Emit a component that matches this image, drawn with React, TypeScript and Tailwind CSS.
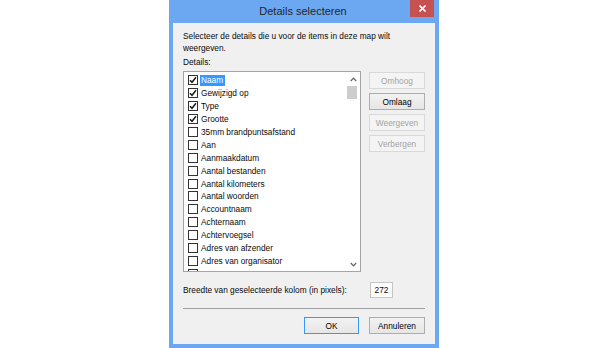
import { useState } from "react";

const ITEMS = [
  { label: "Naam", checked: true },
  { label: "Gewijzigd op", checked: true },
  { label: "Type", checked: true },
  { label: "Grootte", checked: true },
  { label: "35mm brandpuntsafstand", checked: false },
  { label: "Aan", checked: false },
  { label: "Aanmaakdatum", checked: false },
  { label: "Aantal bestanden", checked: false },
  { label: "Aantal kilometers", checked: false },
  { label: "Aantal woorden", checked: false },
  { label: "Accountnaam", checked: false },
  { label: "Achternaam", checked: false },
  { label: "Achtervoegsel", checked: false },
  { label: "Adres van afzender", checked: false },
  { label: "Adres van organisator", checked: false },
  // next row only peeks out under the edge, its label is out of view
  { label: "", checked: false },
];

function Check({ checked }: { checked: boolean }) {
  return (
    <div className="w-[10px] h-[10px] shrink-0 border border-[#333333] bg-white flex items-center justify-center">
      {checked && (
        <svg width="8" height="8" viewBox="0 0 8 8">
          <path d="M1 4.2 L3 6.3 L7 1.3" fill="none" stroke="#1a1a1a" strokeWidth="1.5" />
        </svg>
      )}
    </div>
  );
}

function Button({ label, disabled = false, primary = false }: { label: string; disabled?: boolean; primary?: boolean }) {
  return (
    <div
      className={`h-[17px] flex items-center justify-center border text-[8.3px] ${
        disabled
          ? "border-[#d9d9d9] bg-[#f4f4f4] text-[#a3a3a3]"
          : primary
          ? "border-[#3399ff] bg-gradient-to-b from-[#f2f2f2] to-[#e6e6e6] text-black"
          : "border-[#adadad] bg-gradient-to-b from-[#f2f2f2] to-[#e6e6e6] text-black"
      }`}
    >
      {label}
    </div>
  );
}

export default function App() {
  const [items] = useState(ITEMS);

  return (
    <div className="w-[608px] h-[348px] bg-white flex justify-center overflow-hidden font-['Liberation_Sans',Arial,sans-serif] text-[#0a0a0a]">
      <div className="w-[270px] h-[348px] shrink-0 bg-[#6ba8f1] flex flex-col px-[4px]">
        {/* title bar */}
        <div className="relative h-[23px] flex items-center justify-center">
          <span className="text-[11px] text-[#262626] pr-[2px]">Details selecteren</span>
          <div className="absolute top-0 right-[1px] w-[24px] h-[17px] bg-[#c75050] flex items-center justify-center">
            <svg width="7" height="7" viewBox="0 0 7 7">
              <path d="M0.5 0.5 L6.5 6.5 M6.5 0.5 L0.5 6.5" stroke="white" strokeWidth="1.6" />
            </svg>
          </div>
        </div>

        <div className="h-[321px] bg-[#f0f0f0] flex flex-col px-[10px] pt-[7px] text-[8.3px] leading-[12px]">
          <p>Selecteer de details die u voor de items in deze map wilt</p>
          <p>weergeven.</p>
          <p className="mt-[2px]">Details:</p>

          <div className="mt-[3px] flex gap-[8px]">
            {/* list */}
            <div className="w-[178px] h-[201px] border border-[#a5a5a5] bg-white flex overflow-hidden">
              <div className="flex-1 pt-[2px] pl-[4px] overflow-hidden">
                {items.map((it, i) => (
                  <div key={i} className="h-[12.9px] flex items-center">
                    <Check checked={it.checked} />
                    {it.label && (
                      <span
                        className={`ml-[2px] h-[11px] px-[1px] flex items-center whitespace-nowrap ${
                          i === 0 ? "bg-[#3399ff] text-white pr-[2px]" : ""
                        }`}
                      >
                        {it.label}
                      </span>
                    )}
                  </div>
                ))}
              </div>
              {/* scrollbar */}
              <div className="w-[14px] flex flex-col">
                <div className="h-[14px] flex items-center justify-center">
                  <svg width="7" height="5" viewBox="0 0 7 5">
                    <path d="M0.8 4 L3.5 1.2 L6.2 4" fill="none" stroke="#606060" strokeWidth="1.2" />
                  </svg>
                </div>
                <div className="h-[13px] w-[10px] ml-[1px] bg-[#cdcdcd]" />
                <div className="flex-1" />
                <div className="h-[14px] flex items-center justify-center">
                  <svg width="7" height="5" viewBox="0 0 7 5">
                    <path d="M0.8 1 L3.5 3.8 L6.2 1" fill="none" stroke="#606060" strokeWidth="1.2" />
                  </svg>
                </div>
              </div>
            </div>

            {/* side buttons */}
            <div className="w-[56px] mt-[1px] flex flex-col gap-[4px]">
              <Button label="Omhoog" disabled />
              <Button label="Omlaag" />
              <Button label="Weergeven" disabled />
              <Button label="Verbergen" disabled />
            </div>
          </div>

          <div className="mt-[10px] h-[16px] flex items-center justify-between">
            <span>Breedte van geselecteerde kolom (in pixels):</span>
            <div className="mr-[32px] w-[23px] h-[16px] border border-[#c5c5c5] bg-white flex items-center justify-center">
              272
            </div>
          </div>

          <div className="mt-[10px] border-t border-[#a0a0a0]" />

          <div className="mt-[8px] flex justify-end gap-[10px]">
            <div className="w-[55px]">
              <Button label="OK" primary />
            </div>
            <div className="w-[56px]">
              <Button label="Annuleren" />
            </div>
          </div>
        </div>
      </div>
    </div>
  );
}
